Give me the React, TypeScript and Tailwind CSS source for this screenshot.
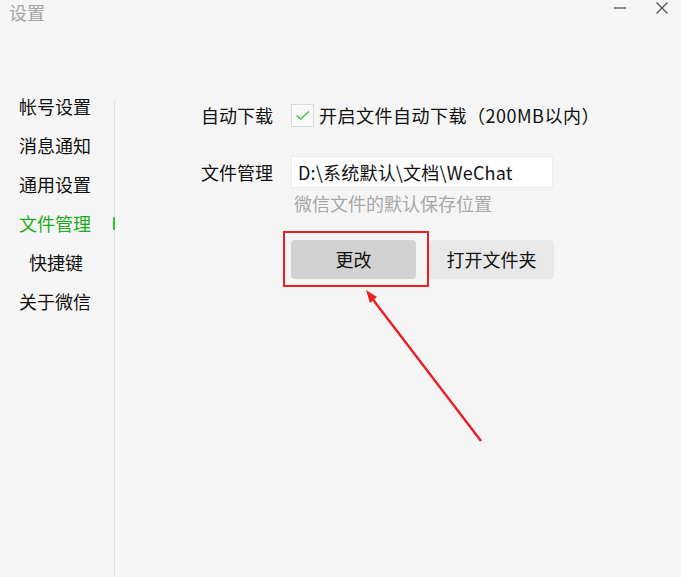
import React from "react";

const navItems = [
  { label: "帐号设置", indent: false },
  { label: "消息通知", indent: false },
  { label: "通用设置", indent: false },
  { label: "文件管理", indent: false, active: true },
  { label: "快捷键", indent: true },
  { label: "关于微信", indent: false },
];

export default function App() {
  return (
    <div className="relative flex h-[577px] w-[681px] flex-col overflow-hidden bg-[#f5f5f5] font-['Noto_Sans_CJK_SC','Noto_Sans',sans-serif] text-[#111]">
      {/* title bar */}
      <div className="flex h-[28px] items-start justify-between">
        <div className="pl-[9px] pt-[1px] text-[18px] leading-[23px] text-[#a3a3a3]">设置</div>
        <div className="flex items-start pt-[1px]">
          <svg width="14" height="14" viewBox="0 0 14 14" className="mr-[28px] mt-[1px]">
            <line x1="1" y1="6" x2="13" y2="6" stroke="#555" strokeWidth="1.3" />
          </svg>
          <svg width="14" height="14" viewBox="0 0 14 14" className="mr-[12px]">
            <path d="M1.5 1.5 L12.5 12.5 M12.5 1.5 L1.5 12.5" stroke="#555" strokeWidth="1.3" />
          </svg>
        </div>
      </div>

      {/* body */}
      <div className="flex flex-1">
        <nav className="flex w-[114px] flex-col pt-[59px]">
          {navItems.map((it) => (
            <div
              key={it.label}
              className={`relative h-[39px] text-[18px] leading-[39px] ${it.indent ? "pl-[29px]" : "pl-[19px]"} ${it.active ? "text-[#1aad19]" : "text-[#111]"}`}
            >
              {it.label}
              {it.active && (
                <span className="absolute left-[113px] top-[13px] h-[13px] w-[2px] bg-[#2fc42f]" />
              )}
            </div>
          ))}
        </nav>
        <div className="mt-[72px] w-px bg-[#e2e2e2]" />

        {/* content */}
        <div className="flex flex-col pl-[86px] pt-[76px]">
          <div className="flex h-[23px] items-center">
            <div className="w-[72px] text-[18px] leading-[23px]">自动下载</div>
            <div className="ml-[18px] flex h-[23px] w-[23px] items-center justify-center border border-[#dadada] bg-[#f9f9f9]">
              <svg width="16" height="12" viewBox="0 0 16 12">
                <path d="M1.5 5.5 L5.5 9 L14 1.5" fill="none" stroke="#4cc14c" strokeWidth="1.5" />
              </svg>
            </div>
            <div className="ml-[5px] text-[18px] leading-[23px] tracking-[0.5px]">开启文件自动下载（200MB以内）</div>
          </div>

          <div className="mt-[29px] flex h-[32px] items-center">
            <div className="w-[72px] text-[18px] leading-[32px]">文件管理</div>
            <div className="ml-[18px] flex h-[32px] w-[262px] items-center border border-[#ececec] bg-white pl-[6px] text-[18px] tracking-[0.2px]">
              D:\系统默认\文档\WeChat
            </div>
          </div>
          <div className="ml-[93px] mt-[3px] text-[18px] leading-[24px] text-[#a8a8a8]">
            微信文件的默认保存位置
          </div>

          <div className="ml-[90px] mt-[25px] flex gap-[13px]">
            <button className="h-[39px] w-[125px] rounded-[4px] bg-[#d2d2d2] text-[18px] text-[#111]">
              更改
            </button>
            <button className="h-[39px] w-[125px] rounded-[4px] bg-[#e8e8e8] text-[18px] text-[#111]">
              打开文件夹
            </button>
          </div>
        </div>
      </div>

      {/* annotation overlay */}
      <div className="pointer-events-none absolute left-[283px] top-[231px] h-[56px] w-[146px] border-2 border-[#e81f27]" />
      <svg className="pointer-events-none absolute left-0 top-0" width="681" height="577">
        <line x1="481" y1="441" x2="371" y2="297" stroke="#e81f27" strokeWidth="2.4" />
        <path d="M366 290 L377 297 L370 303 Z" fill="#e81f27" />
      </svg>
    </div>
  );
}
